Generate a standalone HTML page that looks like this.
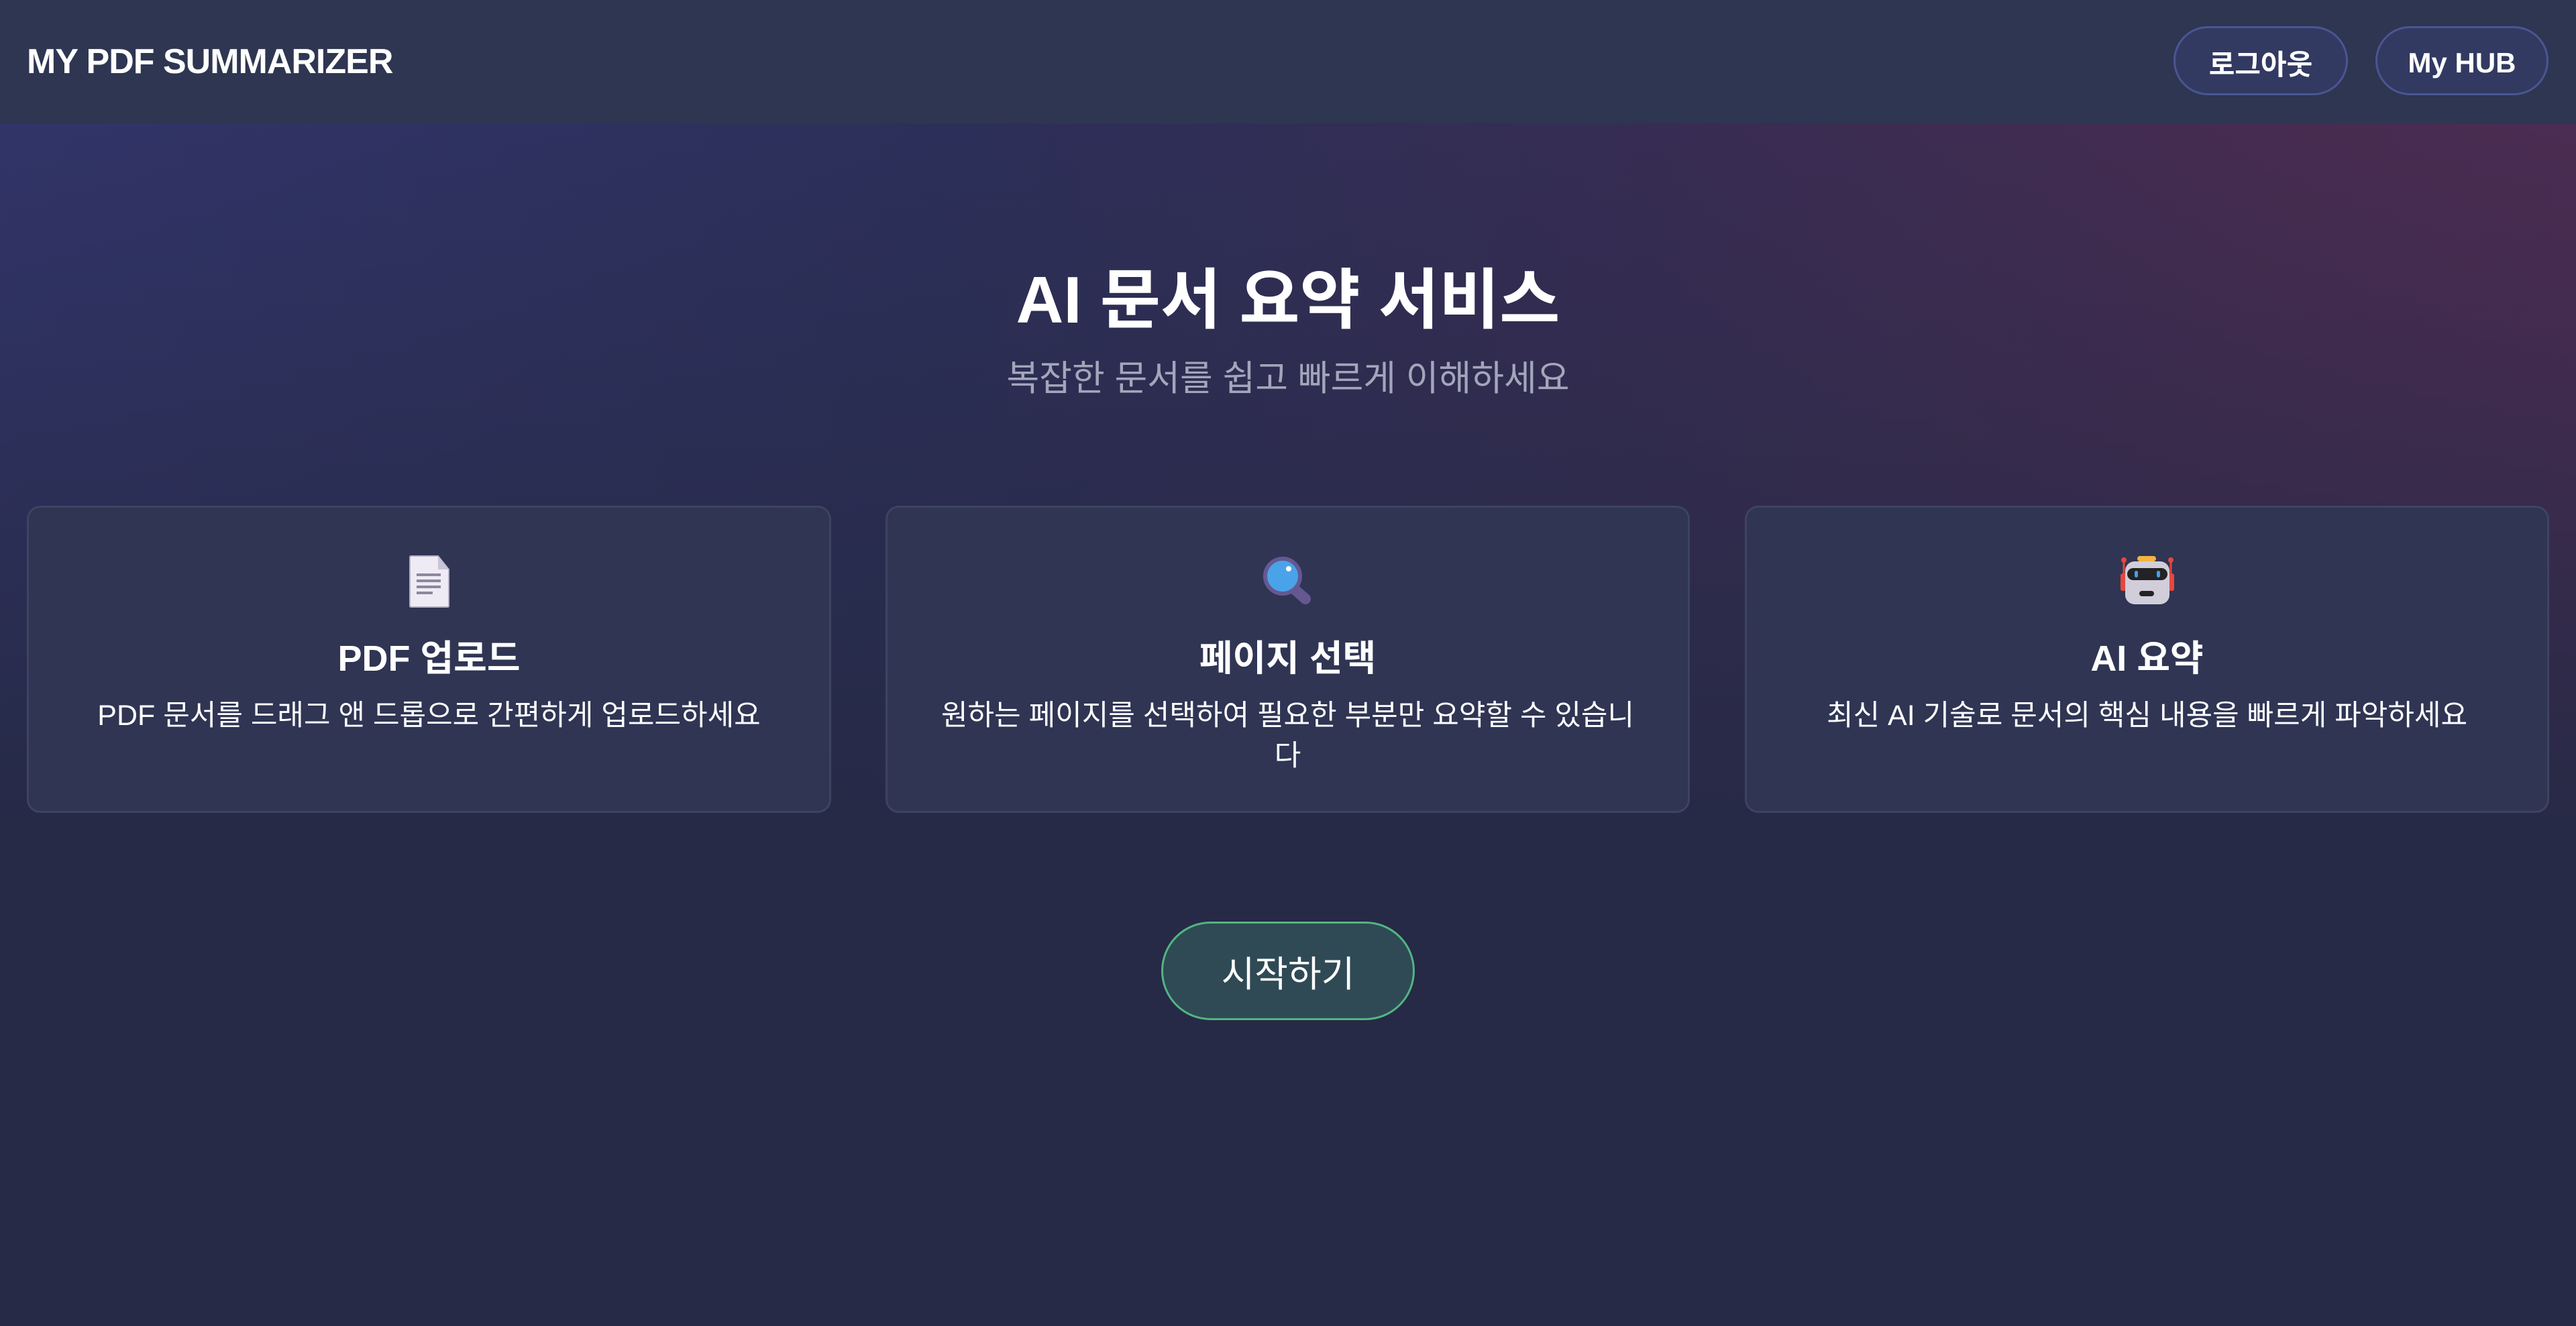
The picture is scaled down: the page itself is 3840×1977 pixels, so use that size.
<!DOCTYPE html>
<html><head><meta charset="utf-8">
<style>
*{margin:0;padding:0;box-sizing:border-box}
html,body{width:3840px;height:1977px;overflow:hidden}
body{font-family:"Liberation Sans","Noto Sans CJK KR",sans-serif;color:#fff;
background:linear-gradient(to bottom,rgba(38,42,70,0) 0px,rgba(38,42,70,0.45) 600px,#262a46 1250px),
linear-gradient(100deg,#33366e 0%,#2d305c 35%,#3a2d55 60%,#4c2c52 82%,#562c55 100%);position:relative}
.hdr{position:absolute;left:0;top:0;width:3840px;height:184px;background:#2e3651;}
.logo{position:absolute;left:40px;top:62px;font-size:52px;font-weight:bold;letter-spacing:-1px}
.btn{position:absolute;top:39px;height:103px;border:3px solid #4a5692;background:#323a62;border-radius:52px;font-size:42px;font-weight:bold;display:flex;align-items:center;justify-content:center;padding-top:6px}
h1{position:absolute;left:0;width:3840px;top:368px;text-align:center;font-size:98px;font-weight:bold}
.sub{position:absolute;left:0;width:3840px;top:522px;text-align:center;font-size:53px;color:#a3a6bb}
.card{position:absolute;top:754px;width:1199px;height:458px;background:#2f3553;border:3px solid #3d4462;border-radius:20px;text-align:center}
.card svg{position:absolute;left:50%;transform:translateX(-50%);top:70px}
.ct{position:absolute;left:0;right:0;top:180px;font-size:54px;font-weight:bold}
.cd{position:absolute;left:20px;right:20px;top:280px;font-size:43px;line-height:60px}
.start{position:absolute;left:1731px;top:1374px;width:378px;height:147px;border:3px solid #52b582;background:#2f4a55;border-radius:74px;font-size:54px;display:flex;align-items:center;justify-content:center}
</style></head><body>
<div class="hdr">
<div class="logo">MY PDF SUMMARIZER</div>
<div class="btn" style="left:3240px;width:260px">로그아웃</div>
<div class="btn" style="left:3541px;width:258px">My HUB</div>
</div>
<h1>AI 문서 요약 서비스</h1>
<div class="sub">복잡한 문서를 쉽고 빠르게 이해하세요</div>

<div class="card" style="left:40px">
<svg width="62" height="80" viewBox="0 0 62 80"><path d="M4 2 H44 L60 22 V76 Q60 78 58 78 H4 Q2 78 2 76 V4 Q2 2 4 2Z" fill="#eeebf5" stroke="#b3afc2" stroke-width="2"/><path d="M44 2 L44 22 L60 22Z" fill="#c9c4d6"/><g stroke="#8e879f" stroke-width="4"><line x1="12" y1="30" x2="48" y2="30"/><line x1="12" y1="39" x2="48" y2="39"/><line x1="12" y1="48" x2="48" y2="48"/><line x1="12" y1="57" x2="36" y2="57"/></g></svg>
<div class="ct">PDF 업로드</div>
<div class="cd">PDF 문서를 드래그 앤 드롭으로 간편하게 업로드하세요</div>
</div>
<div class="card" style="left:1320px">
<svg width="80" height="80" viewBox="0 0 80 80"><line x1="48" y1="50" x2="66" y2="66" stroke="#655892" stroke-width="16" stroke-linecap="round"/><circle cx="32" cy="32" r="26" fill="#4aa3e8" stroke="#655892" stroke-width="6"/><ellipse cx="41" cy="21" rx="4" ry="4" fill="#fff"/></svg>
<div class="ct">페이지 선택</div>
<div class="cd" style="white-space:nowrap">원하는 페이지를 선택하여 필요한 부분만 요약할 수 있습니<br>다</div>
</div>
<div class="card" style="left:2601px">
<svg width="80" height="80" viewBox="0 0 80 80"><line x1="5" y1="8" x2="5" y2="40" stroke="#e5483c" stroke-width="3"/><line x1="75" y1="8" x2="75" y2="40" stroke="#e5483c" stroke-width="3"/><circle cx="5" cy="8" r="4" fill="#e5483c"/><circle cx="75" cy="8" r="4" fill="#e5483c"/><rect x="0" y="28" width="8" height="26" rx="3" fill="#e5483c"/><rect x="72" y="28" width="8" height="26" rx="3" fill="#e5483c"/><rect x="25" y="2" width="28" height="8" rx="4" fill="#f4b440"/><rect x="7" y="10" width="66" height="64" rx="14" fill="#d1cdd9"/><rect x="10" y="20" width="60" height="18" rx="9" fill="#232325"/><rect x="21" y="24" width="5" height="10" rx="2.5" fill="#40a3e9"/><rect x="54" y="24" width="5" height="10" rx="2.5" fill="#40a3e9"/><rect x="28" y="54" width="22" height="8" rx="4" fill="#232325"/></svg>
<div class="ct">AI 요약</div>
<div class="cd">최신 AI 기술로 문서의 핵심 내용을 빠르게 파악하세요</div>
</div>
<div class="start">시작하기</div>
</body></html>
